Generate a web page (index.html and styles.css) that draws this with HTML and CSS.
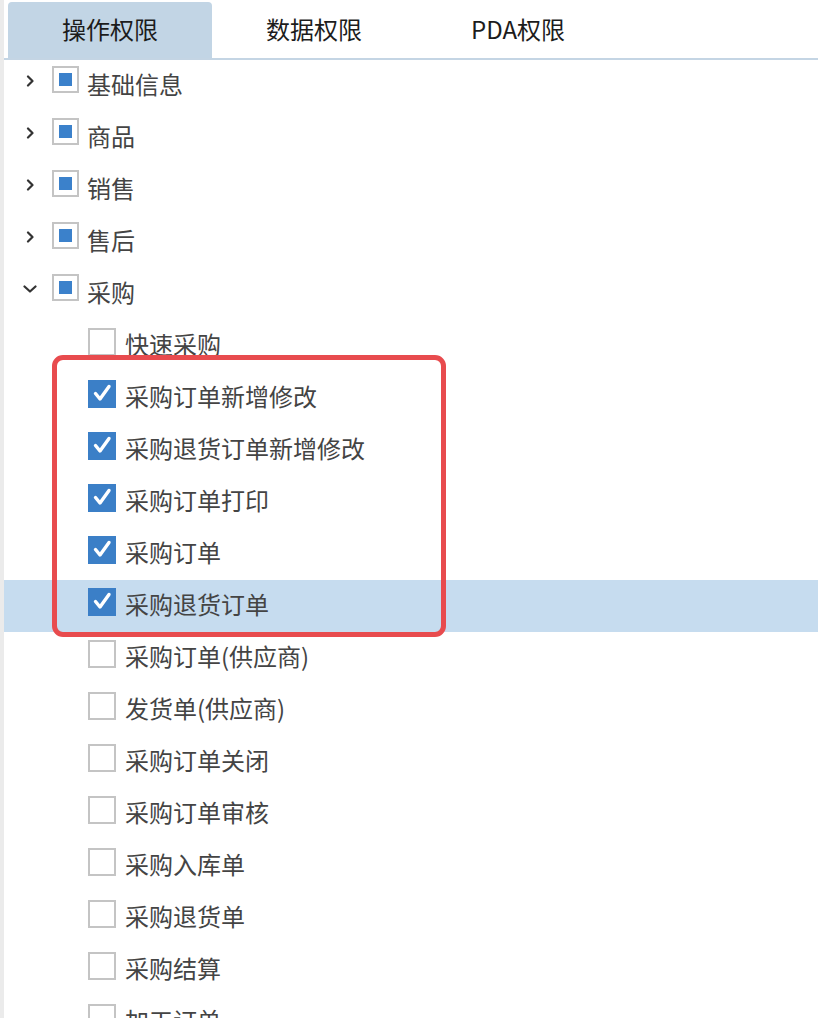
FILE: index.html
```html
<!DOCTYPE html>
<html lang="zh-CN">
<head>
<meta charset="utf-8">
<title>权限</title>
<link rel="stylesheet" href="styles.css">
</head>
<body>
<div class="page">
  <div class="side-strip"></div>
  <div class="panel">
    <div class="tabs">
      <div class="tab active">操作权限</div>
      <div class="tab">数据权限</div>
      <div class="tab">PDA权限</div>
    </div>
    <div class="tree">
      <div class="row parent">
        <span class="chev"><svg width="12" height="12" viewBox="0 0 12 12"><polyline points="4,1.5 8.5,6 4,10.5" /></svg></span>
        <span class="box partial"><i></i></span><span class="label">基础信息</span>
      </div>
      <div class="row parent">
        <span class="chev"><svg width="12" height="12" viewBox="0 0 12 12"><polyline points="4,1.5 8.5,6 4,10.5" /></svg></span>
        <span class="box partial"><i></i></span><span class="label">商品</span>
      </div>
      <div class="row parent">
        <span class="chev"><svg width="12" height="12" viewBox="0 0 12 12"><polyline points="4,1.5 8.5,6 4,10.5" /></svg></span>
        <span class="box partial"><i></i></span><span class="label">销售</span>
      </div>
      <div class="row parent">
        <span class="chev"><svg width="12" height="12" viewBox="0 0 12 12"><polyline points="4,1.5 8.5,6 4,10.5" /></svg></span>
        <span class="box partial"><i></i></span><span class="label">售后</span>
      </div>
      <div class="row parent">
        <span class="chev down"><svg width="14" height="12" viewBox="0 0 14 12"><polyline points="1.5,3.5 7,8.5 12.5,3.5" /></svg></span>
        <span class="box partial"><i></i></span><span class="label">采购</span>
      </div>
      <div class="row child"><span class="box"></span><span class="label">快速采购</span></div>
      <div class="row child"><span class="box checked"><svg width="27" height="27" viewBox="0 0 27 27"><polyline points="6.5,12.5 11,18 20,5.5" /></svg></span><span class="label">采购订单新增修改</span></div>
      <div class="row child"><span class="box checked"><svg width="27" height="27" viewBox="0 0 27 27"><polyline points="6.5,12.5 11,18 20,5.5" /></svg></span><span class="label">采购退货订单新增修改</span></div>
      <div class="row child"><span class="box checked"><svg width="27" height="27" viewBox="0 0 27 27"><polyline points="6.5,12.5 11,18 20,5.5" /></svg></span><span class="label">采购订单打印</span></div>
      <div class="row child"><span class="box checked"><svg width="27" height="27" viewBox="0 0 27 27"><polyline points="6.5,12.5 11,18 20,5.5" /></svg></span><span class="label">采购订单</span></div>
      <div class="row child selected"><span class="box checked"><svg width="27" height="27" viewBox="0 0 27 27"><polyline points="6.5,12.5 11,18 20,5.5" /></svg></span><span class="label">采购退货订单</span></div>
      <div class="row child"><span class="box"></span><span class="label">采购订单(供应商)</span></div>
      <div class="row child"><span class="box"></span><span class="label">发货单(供应商)</span></div>
      <div class="row child"><span class="box"></span><span class="label">采购订单关闭</span></div>
      <div class="row child"><span class="box"></span><span class="label">采购订单审核</span></div>
      <div class="row child"><span class="box"></span><span class="label">采购入库单</span></div>
      <div class="row child"><span class="box"></span><span class="label">采购退货单</span></div>
      <div class="row child"><span class="box"></span><span class="label">采购结算</span></div>
      <div class="row child"><span class="box"></span><span class="label">加工订单</span></div>
      <div class="highlight-frame"></div>
    </div>
  </div>
</div>
</body>
</html>
```

FILE: styles.css
```css
html, body {
  margin: 0;
  padding: 0;
  background: #ffffff;
  overflow: hidden;
}

body {
  font-family: "Noto Sans CJK SC", "Noto Sans", sans-serif;
}

.page {
  display: flex;
  height: 1018px;
}

.side-strip {
  width: 4px;
  flex: 0 0 4px;
  background: #ebebeb;
}

.panel {
  flex: 1;
  min-width: 0;
}

.tabs {
  display: flex;
  height: 56px;
  padding: 2px 0 0 4px;
  border-bottom: 2px solid #c4d5e4;
}

.tab {
  width: 204px;
  height: 56px;
  line-height: 54px;
  text-align: center;
  font-size: 24px;
  color: #1c1c1c;
  border-radius: 4px 4px 0 0;
}

.tab.active {
  background: #c2d5e5;
}

.tree {
  position: relative;
}

.row {
  display: flex;
  align-items: flex-start;
  height: 52px;
  box-sizing: border-box;
}

.row.parent {
  padding-left: 20px;
}

.row.child {
  padding-left: 84px;
}

.row.selected {
  background: #c6dcef;
}

.chev {
  width: 28px;
  height: 27px;
  margin-top: 7px;
  display: flex;
  align-items: center;
  justify-content: flex-start;
}

.chev svg polyline {
  fill: none;
  stroke: #333333;
  stroke-width: 2.2;
  stroke-linecap: round;
  stroke-linejoin: round;
}

.chev.down svg {
  margin-left: -1px;
}

.box {
  width: 27px;
  height: 27px;
  margin-top: 6px;
  box-sizing: border-box;
  border: 2px solid #c4c4c4;
  background: #ffffff;
  display: flex;
  align-items: center;
  justify-content: center;
  flex: 0 0 auto;
}

.box.partial i {
  display: block;
  width: 13px;
  height: 13px;
  background: #3b81cb;
  margin-top: -1px;
}

.box.checked {
  border: none;
  background: #3b7fc7;
}

.box.checked svg polyline {
  fill: none;
  stroke: #ffffff;
  stroke-width: 3.4;
  stroke-linecap: round;
  stroke-linejoin: round;
}

.row.child .box {
  width: 28px;
  height: 28px;
  margin-top: 8px;
}

.label {
  font-size: 24px;
  line-height: 47px;
  color: #444444;
  margin-left: 9px;
  white-space: nowrap;
}

.row.parent .label {
  margin-left: 8px;
}

.highlight-frame {
  position: absolute;
  left: 48px;
  top: 295px;
  width: 394px;
  height: 282px;
  box-sizing: border-box;
  border: 5px solid #e84b4e;
  border-radius: 11px;
  pointer-events: none;
}
```
